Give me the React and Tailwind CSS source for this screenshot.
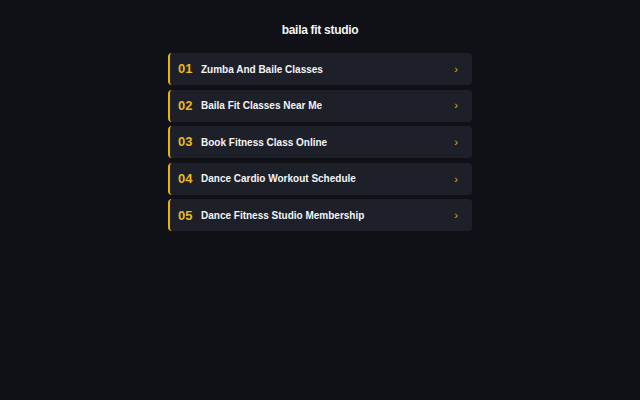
import React from 'react';

const items = [
  'Zumba And Baile Classes',
  'Baila Fit Classes Near Me',
  'Book Fitness Class Online',
  'Dance Cardio Workout Schedule',
  'Dance Fitness Studio Membership',
];

export default function App() {
  return (
    <div className="min-h-screen bg-[#0f1117] font-['Liberation_Sans',Arial,sans-serif] pt-[20px]">
      <h1 className="text-center text-[12px] font-bold text-[#f3f4f6] leading-[20px] tracking-[-0.3px]">baila fit studio</h1>
      <div className="w-[304px] mx-auto mt-[13px] flex flex-col gap-[4.6px]">
        {items.map((t, i) => (
          <div
            key={t}
            className="h-[32px] flex items-center bg-[#1e2029] rounded-[4px] border-l-2 border-[#eab308] pl-[8px] pr-[14px]"
          >
            <span className="text-[13px] font-bold text-[#e8b923] w-[23px]">{String(i + 1).padStart(2, '0')}</span>
            <span className="flex-1 text-[10px] font-bold text-[#f3f4f6]">{t}</span>
            <span className="text-[11px] text-[#eab308]">›</span>
          </div>
        ))}
      </div>
    </div>
  );
}
